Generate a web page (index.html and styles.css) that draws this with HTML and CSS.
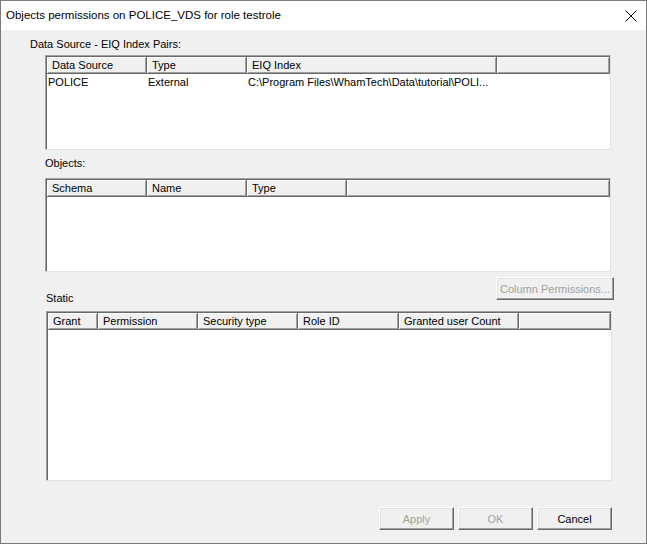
FILE: index.html
```html
<!DOCTYPE html>
<html>
<head>
<meta charset="utf-8">
<link rel="stylesheet" href="styles.css">
</head>
<body>
<div class="window">
  <div class="titlebar">
    <span class="title">Objects permissions on POLICE_VDS for role testrole</span>
    <svg class="close" width="12" height="12" viewBox="0 0 12 12"><path d="M0.5 0.5 L11.5 11.5 M11.5 0.5 L0.5 11.5" stroke="#000" stroke-width="1" fill="none"/></svg>
  </div>
  <div class="content">
    <div class="label label-first">Data Source - EIQ Index Pairs:</div>
    <div class="list list-pairs">
      <div class="head">
        <div class="hc w100">Data Source</div>
        <div class="hc w100">Type</div>
        <div class="hc w250">EIQ Index</div>
        <div class="hc fill"></div>
      </div>
      <div class="row">
        <div class="c w100">POLICE</div>
        <div class="c w100">External</div>
        <div class="c w250">C:\Program Files\WhamTech\Data\tutorial\POLI...</div>
      </div>
    </div>

    <div class="label label-objects">Objects:</div>
    <div class="list list-objects">
      <div class="head">
        <div class="hc w100">Schema</div>
        <div class="hc w100">Name</div>
        <div class="hc w100">Type</div>
        <div class="hc fill"></div>
      </div>
    </div>

    <div class="static-row">
      <div class="label label-static">Static</div>
      <button class="btn btn-wide disabled">Column Permissions...</button>
    </div>
    <div class="list list-static">
      <div class="head">
        <div class="hc w50">Grant</div>
        <div class="hc w100">Permission</div>
        <div class="hc w100">Security type</div>
        <div class="hc w101">Role ID</div>
        <div class="hc w120">Granted user Count</div>
        <div class="hc fill"></div>
      </div>
    </div>

    <div class="footer">
      <button class="btn disabled">Apply</button>
      <button class="btn disabled">OK</button>
      <button class="btn">Cancel</button>
    </div>
  </div>
</div>
</body>
</html>
```

FILE: styles.css
```css
* { box-sizing: border-box; }
html, body { margin: 0; padding: 0; background: #f0f0f0; }
body { font-family: "Liberation Sans", Arial, sans-serif; font-size: 11px; color: #000; }

.window {
  width: 647px;
  height: 544px;
  border: 1px solid #7a7a7a;
  background: #f0f0f0;
  display: flex;
  flex-direction: column;
}

.titlebar {
  height: 29px;
  background: #fff;
  display: flex;
  align-items: center;
  justify-content: space-between;
  padding: 0 9px 1px 5px;
}
.title { font-size: 11.5px; color: #000; }
.close { display: block; margin-top: 1px; }

.content {
  padding: 0 35px 0 29px;
  display: flex;
  flex-direction: column;
}

.label { line-height: 13px; height: 13px; white-space: nowrap; }
.label-first { margin-top: 8px; }
.label-objects { margin-top: 7px; margin-left: 15px; }
.label-static { margin-top: 15px; margin-left: 16px; }

.list {
  margin-left: 15px;
  width: 566px;
  background: #fff;
  border: 1px solid;
  border-color: #a0a0a0 #e3e3e3 #e3e3e3 #a0a0a0;
  box-shadow: inset 1px 1px 0 #696969;
  padding: 1px 0 0 1px;
  overflow: hidden;
}
.list-pairs { margin-top: 4px; height: 95px; }
.list-objects { margin-top: 8px; height: 94px; }
.list-static { margin-top: 6px; height: 170px; margin-left: 16px; }

.head {
  display: flex;
  height: 17px;
}
.hc {
  height: 17px;
  background: #f0f0f0;
  border-right: 1px solid #696969;
  border-bottom: 1px solid #696969;
  box-shadow: inset 1px 1px 0 #fff, inset -1px -1px 0 #a0a0a0;
  padding: 2px 0 0 5px;
  line-height: 13px;
  white-space: nowrap;
  overflow: hidden;
  flex: none;
}
.hc.fill { flex: 1; }

.w50 { width: 50px; }
.w100 { width: 100px; }
.w101 { width: 101px; }
.w120 { width: 120px; }
.w250 { width: 250px; }

.row { display: flex; height: 16px; align-items: center; }
.c { padding-left: 1px; white-space: nowrap; overflow: hidden; flex: none; line-height: 13px; margin-top: 1px; }

.static-row {
  display: flex;
  justify-content: space-between;
  align-items: flex-start;
  margin-top: 5px;
  height: 28px;
}

.btn {
  font-family: "Liberation Sans", Arial, sans-serif;
  font-size: 11px;
  width: 75px;
  height: 23px;
  background: #f0f0f0;
  border: 1px solid;
  border-color: #fff #696969 #696969 #fff;
  box-shadow: inset -1px -1px 0 #a0a0a0, inset 1px 1px 0 #e3e3e3;
  color: #000;
  padding: 0;
  margin: 0;
}
.btn.disabled { color: #a0a0a0; }
.btn-wide { width: 118px; margin-right: -3px; }

.footer {
  display: flex;
  justify-content: flex-end;
  gap: 4px;
  margin-top: 26px;
  margin-right: -1px;
}
```
